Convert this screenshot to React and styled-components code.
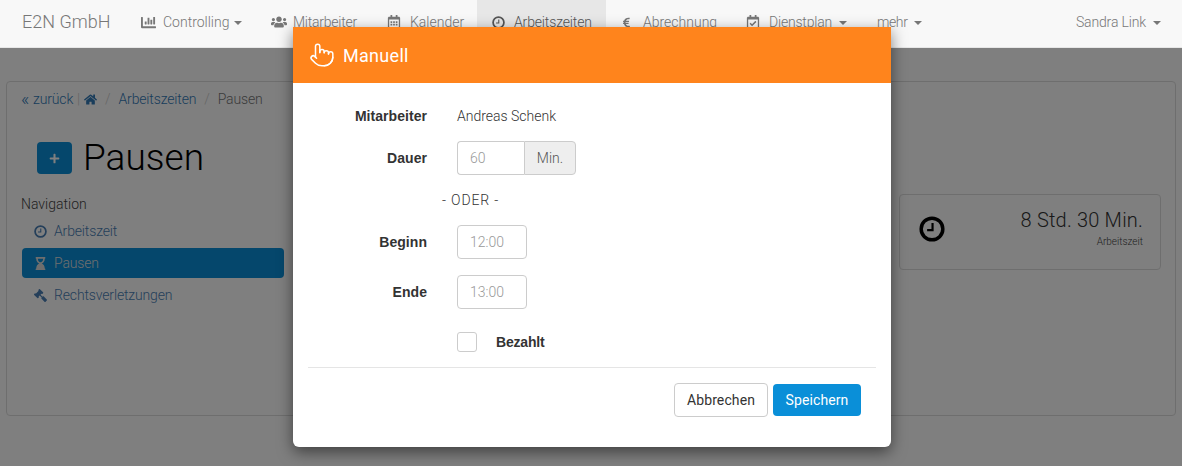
import styled, { createGlobalStyle } from "styled-components";
import { Pointer } from "lucide-react";
import {
  FaChartBar,
  FaUsers,
  FaRegCalendarAlt,
  FaEuroSign,
  FaRegCalendarCheck,
  FaHome,
  FaPlus,
  FaHourglassEnd,
  FaGavel,
} from "react-icons/fa";

const GlobalStyle = createGlobalStyle`
  html, body {
    margin: 0;
    height: 100%;
    overflow: hidden;
    background: #fff;
    font-family: "Roboto", "Liberation Sans", sans-serif;
    font-weight: 300;
    font-size: 14px;
    color: #333;
  }
  * { box-sizing: border-box; }
`;

const Page = styled.div`
  position: relative;
  width: 1182px;
  height: 466px;
  overflow: hidden;
`;

const Navbar = styled.nav`
  position: relative;
  z-index: 2;
  display: flex;
  height: 48px;
  background: #f8f8f8;
  border-bottom: 1px solid #e7e7e7;
  color: #777;
`;

const Brand = styled.div`
  width: 126px;
  padding-left: 22px;
  font-size: 18px;
  line-height: 44px;
`;

const NavItem = styled.div`
  display: flex;
  align-items: center;
  gap: ${(p) => p.$gap || 9}px;
  height: 47px;
  padding: 0 15px 3px;
  width: ${(p) => p.$width}px;
  background: ${(p) => (p.$active ? "#e7e7e7" : "transparent")};
  color: ${(p) => (p.$active ? "#555" : "#777")};
  letter-spacing: ${(p) => p.$track || 0}px;
  white-space: nowrap;
  svg { flex: none; }
`;

const NavUser = styled(NavItem)`
  margin-left: auto;
  padding-right: 21px;
`;

const Caret = styled.span`
  display: inline-block;
  width: 0;
  height: 0;
  margin-left: -2px;
  margin-top: 2px;
  border-top: 4px solid currentColor;
  border-left: 4px solid transparent;
  border-right: 4px solid transparent;
`;

const Content = styled.main`
  padding: 33px 6px 0;
`;

const Panel = styled.section`
  height: 335px;
  border: 1px solid #ddd;
  border-radius: 4px;
  padding: 7px 14px;
`;

const Breadcrumb = styled.div`
  display: flex;
  align-items: center;
  height: 20px;
  color: #777;
  letter-spacing: -0.15px;
  a { color: #337ab7; }
  svg { color: #337ab7; }
`;

const BackArrows = styled.span`
  width: 12px;
  font-size: 18px;
  line-height: 20px;
  color: #337ab7;
`;

const Sep = styled.span`
  color: #ccc;
  margin: 0 ${(p) => p.$space || 8}px;
`;

const PanelBody = styled.div`
  display: flex;
  justify-content: space-between;
`;

const LeftColumn = styled.div`
  width: 263px;
`;

const TitleRow = styled.div`
  display: flex;
  align-items: center;
  gap: 11px;
  margin: 24px 0 0 16px;
  height: 50px;
`;

const AddButton = styled.div`
  display: flex;
  align-items: center;
  justify-content: center;
  width: 35px;
  height: 32px;
  border-radius: 4px;
  background: #0a8fd8;
  color: #fff;
`;

const Title = styled.h1`
  margin: 0;
  font-size: 37px;
  font-weight: 300;
  line-height: 40px;
  color: #000;
`;

const NavHeading = styled.div`
  margin-top: 11px;
  height: 20px;
  line-height: 20px;
  color: #444;
`;

const SideList = styled.div`
  display: flex;
  flex-direction: column;
  gap: 2px;
  margin: 2px 0 0 1px;
`;

const SideItem = styled.div`
  display: flex;
  align-items: center;
  gap: 7px;
  height: 30px;
  padding: 0 12px;
  border-radius: 4px;
  letter-spacing: -0.15px;
  background: ${(p) => (p.$active ? "#0a8fd8" : "transparent")};
  color: ${(p) => (p.$active ? "#ddd" : "#4a7fb5")};
`;

const FlippedGavel = styled(FaGavel)`
  transform: scaleX(-1);
`;

const StatCard = styled.div`
  display: flex;
  justify-content: space-between;
  width: 262px;
  height: 76px;
  margin: 85px 0 0;
  padding: 14px 17px 0 19px;
  border: 1px solid #ddd;
  border-radius: 4px;
`;

const StatIcon = styled.div`
  padding-top: 7px;
  color: #000;
`;

const StatText = styled.div`
  text-align: right;
`;

const StatValue = styled.div`
  font-size: 20px;
  line-height: 22px;
  letter-spacing: 0.2px;
  color: #333;
`;

const StatLabel = styled.div`
  margin-top: 4px;
  font-size: 10px;
  line-height: 14px;
  color: #444;
`;

const Backdrop = styled.div`
  position: absolute;
  inset: 48px 0 0;
  z-index: 1;
  background: rgba(0, 0, 0, 0.5);
`;

const Modal = styled.div`
  position: absolute;
  left: 293px;
  top: 27px;
  z-index: 3;
  width: 598px;
  height: 420px;
  background: #fff;
  border-radius: 0 0 6px 6px;
  box-shadow: 0 5px 15px rgba(0, 0, 0, 0.5);
`;

const ModalHeader = styled.header`
  display: flex;
  align-items: center;
  gap: 8px;
  height: 56px;
  padding-left: 16px;
  background: #ff841c;
  color: #fff;
`;

const ModalTitle = styled.h4`
  margin: 0;
  font-size: 18px;
  font-weight: 400;
  letter-spacing: 0.3px;
`;

const ModalBody = styled.div`
  padding: 16px 15px 0;
`;

const FormRow = styled.div`
  display: grid;
  grid-template-columns: 119px 1fr;
  column-gap: 30px;
  align-items: center;
  min-height: 34px;
  margin-top: ${(p) => p.$top || 0}px;
`;

const Label = styled.label`
  text-align: right;
  font-family: "Liberation Sans", sans-serif;
  font-weight: 700;
  letter-spacing: 0.05px;
  color: #333;
`;

const StaticValue = styled.div`
  color: #333;
`;

const InputGroup = styled.div`
  display: flex;
`;

const Input = styled.input`
  width: ${(p) => p.$width}px;
  height: 34px;
  padding: 0 12px;
  border: 1px solid #ccc;
  border-radius: ${(p) => (p.$joined ? "4px 0 0 4px" : "4px")};
  ${(p) => p.$joined && "border-right: 0;"}
  font: inherit;
  color: #555;
  &::placeholder { color: #999; opacity: 1; }
`;

const Addon = styled.span`
  display: flex;
  align-items: center;
  justify-content: center;
  width: 52px;
  height: 34px;
  border: 1px solid #ccc;
  border-radius: 0 4px 4px 0;
  background: #eee;
  color: #555;
`;

const OrLine = styled.div`
  margin: 16px 0 16px;
  height: 18px;
  line-height: 18px;
  padding-left: 134px;
  letter-spacing: 0.85px;
  color: #333;
`;

const CheckLabel = styled.div`
  display: flex;
  align-items: center;
  gap: 19px;
  height: 20px;
  margin: 23px 0 0 149px;
  font-family: "Liberation Sans", sans-serif;
  font-weight: 700;
  letter-spacing: -0.2px;
`;

const CheckBox = styled.span`
  width: 20px;
  height: 20px;
  border: 1px solid #ccc;
  border-radius: 3px;
`;

const ModalFooter = styled.footer`
  display: flex;
  justify-content: flex-end;
  align-items: center;
  gap: 5px;
  margin-top: 15px;
  padding: 15px 15px 0 0;
  border-top: 1px solid #e5e5e5;
`;

const Button = styled.button`
  height: ${(p) => (p.$primary ? 32 : 34)}px;
  width: ${(p) => (p.$primary ? 88 : 94)}px;
  padding: 0;
  border: ${(p) => (p.$primary ? "none" : "1px solid #ccc")};
  border-radius: 4px;
  background: ${(p) => (p.$primary ? "#0a8fd8" : "#fff")};
  color: ${(p) => (p.$primary ? "#fff" : "#333")};
  font: inherit;
  font-weight: 400;
  letter-spacing: 0.1px;
`;

// glyphicon-time, the ring is much heavier than the fa clock
const ClockIcon = ({ size = 13 }) => (
  <svg width={size} height={size} viewBox="0 0 24 24" fill="none" stroke="currentColor">
    <circle cx="12" cy="12" r="10" strokeWidth="3.2" />
    <path d="M12.5 6.5v6.5H7.5" strokeWidth="2" />
  </svg>
);

const navItems = [
  { icon: <FaChartBar size={15} />, label: "Controlling", caret: true, width: 130, gap: 7 },
  { icon: <FaUsers size={16} />, label: "Mitarbeiter", width: 116, gap: 6, track: -0.25 },
  { icon: <FaRegCalendarAlt size={14} />, label: "Kalender", width: 105 },
  { icon: <ClockIcon />, label: "Arbeitszeiten", width: 129, active: true, track: -0.15 },
  { icon: <FaEuroSign size={11} />, label: "Abrechnung", width: 125, gap: 11 },
  { icon: <FaRegCalendarCheck size={14} />, label: "Dienstplan", caret: true, width: 131, track: -0.2 },
  { label: "mehr", caret: true, track: -0.4 },
];

function App() {
  return (
    <Page>
      <GlobalStyle />
      <Navbar>
        <Brand>E2N GmbH</Brand>
        {navItems.map((item) => (
          <NavItem
            key={item.label}
            $width={item.width}
            $gap={item.gap}
            $track={item.track}
            $active={item.active}
          >
            {item.icon}
            {item.label}
            {item.caret && <Caret />}
          </NavItem>
        ))}
        <NavUser $track={-0.15}>
          Sandra Link
          <Caret />
        </NavUser>
      </Navbar>

      <Content>
        <Panel>
          <Breadcrumb>
            <BackArrows>«</BackArrows>
            <a>zurück</a>
            <Sep $space={4}>|</Sep>
            <FaHome size={13} />
            <Sep>/</Sep>
            <a>Arbeitszeiten</a>
            <Sep>/</Sep>
            Pausen
          </Breadcrumb>
          <PanelBody>
            <LeftColumn>
              <TitleRow>
                <AddButton>
                  <FaPlus size={11} />
                </AddButton>
                <Title>Pausen</Title>
              </TitleRow>
              <NavHeading>Navigation</NavHeading>
              <SideList>
                <SideItem>
                  <ClockIcon />
                  Arbeitszeit
                </SideItem>
                <SideItem $active>
                  <FaHourglassEnd size={13} />
                  Pausen
                </SideItem>
                <SideItem>
                  <FlippedGavel size={13} />
                  Rechtsverletzungen
                </SideItem>
              </SideList>
            </LeftColumn>
            <StatCard>
              <StatIcon>
                <ClockIcon size={26} />
              </StatIcon>
              <StatText>
                <StatValue>8 Std. 30 Min.</StatValue>
                <StatLabel>Arbeitszeit</StatLabel>
              </StatText>
            </StatCard>
          </PanelBody>
        </Panel>
      </Content>

      <Backdrop />

      <Modal>
        <ModalHeader>
          <Pointer size={26} strokeWidth={1.4} />
          <ModalTitle>Manuell</ModalTitle>
        </ModalHeader>
        <ModalBody>
          <FormRow>
            <Label>Mitarbeiter</Label>
            <StaticValue>Andreas Schenk</StaticValue>
          </FormRow>
          <FormRow $top={8}>
            <Label>Dauer</Label>
            <InputGroup>
              <Input $width={67} $joined placeholder="60" />
              <Addon>Min.</Addon>
            </InputGroup>
          </FormRow>
          <OrLine>- ODER -</OrLine>
          <FormRow>
            <Label>Beginn</Label>
            <Input $width={70} placeholder="12:00" />
          </FormRow>
          <FormRow $top={16}>
            <Label>Ende</Label>
            <Input $width={70} placeholder="13:00" />
          </FormRow>
          <CheckLabel>
            <CheckBox />
            Bezahlt
          </CheckLabel>
          <ModalFooter>
            <Button>Abbrechen</Button>
            <Button $primary>Speichern</Button>
          </ModalFooter>
        </ModalBody>
      </Modal>
    </Page>
  );
}

export default App;
